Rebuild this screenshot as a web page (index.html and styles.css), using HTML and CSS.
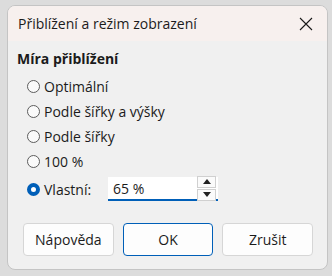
FILE: index.html
```html
<!DOCTYPE html>
<html>
<head>
    <meta charset="UTF-8">
    <title>Přiblížení a režim zobrazení</title>
    <link rel="stylesheet" href="styles.css">
</head>
<body>
    <div class="dialog">
        <div class="titlebar">
            <span class="title">Přiblížení a režim zobrazení</span>
            <svg class="close" width="14" height="14" viewBox="0 0 14 14">
                <path d="M1 1 L13 13 M13 1 L1 13" stroke="#1a1a1a" stroke-width="1.1" fill="none"/>
            </svg>
        </div>
        <div class="content">
            <div class="group-label">Míra přiblížení</div>
            <div class="options">
                <label class="option"><span class="radio"></span>Optimální</label>
                <label class="option"><span class="radio"></span>Podle šířky a výšky</label>
                <label class="option"><span class="radio"></span>Podle šířky</label>
                <label class="option"><span class="radio"></span>100 %</label>
                <div class="option custom">
                    <span class="radio checked"></span>
                    <span class="custom-label">Vlastní:</span>
                    <div class="spin">
                        <span class="spin-value">65 %</span>
                        <div class="spin-buttons">
                            <span class="spin-btn"><svg width="8" height="5" viewBox="0 0 8 5"><path d="M0 5 L4 0 L8 5 Z" fill="#222"/></svg></span>
                            <span class="spin-btn"><svg width="8" height="5" viewBox="0 0 8 5"><path d="M0 0 L4 5 L8 0 Z" fill="#222"/></svg></span>
                        </div>
                    </div>
                </div>
            </div>
            <div class="buttons">
                <button class="btn">Nápověda</button>
                <button class="btn default">OK</button>
                <button class="btn">Zrušit</button>
            </div>
        </div>
    </div>
</body>
</html>
```
FILE: styles.css
```css
body {
    margin: 0;
    background-color: #dcdcdc;
    font-family: "Open Sans", "Noto Sans", sans-serif;
    font-size: 14px;
    color: #1b1b1b;
}

.dialog {
    margin: 5px 4px 0 7px;
    width: 319px;
    height: 263px;
    border: 1px solid #c4c4c4;
    border-radius: 8px;
    background-color: #f0f0f0;
    overflow: hidden;
}

.titlebar {
    height: 35px;
    background-color: #f7f0ee;
    display: flex;
    align-items: center;
    justify-content: space-between;
    padding: 0 14px 0 10px;
}

.title {
    font-size: 14px;
}

.content {
    padding: 8px 14px 0 9px;
}

.group-label {
    font-weight: bold;
    height: 20px;
    line-height: 20px;
}

.options {
    padding-left: 10px;
    margin-top: 5px;
}

.option {
    display: flex;
    align-items: center;
    height: 25px;
}

.radio {
    width: 11px;
    height: 11px;
    border: 1px solid #5c5c5c;
    border-radius: 50%;
    background-color: #fafafa;
    margin-right: 4px;
}

.radio.checked {
    width: 5px;
    height: 5px;
    border: 4px solid #005fb8;
    background-color: #fff;
}

.custom {
    height: 30px;
}

.custom-label {
    width: 64px;
}

.spin {
    width: 110px;
    height: 24px;
    background-color: #fff;
    border-bottom: 2px solid #005fb8;
    display: flex;
    align-items: center;
    justify-content: space-between;
    padding-left: 5px;
    box-sizing: border-box;
}

.spin-buttons {
    display: flex;
    flex-direction: column;
    gap: 1px;
    margin-right: 2px;
}

.spin-btn {
    width: 17px;
    height: 10px;
    border: 1px solid #d0d0d0;
    background-color: #fbfbfb;
    display: flex;
    align-items: center;
    justify-content: center;
}

.buttons {
    display: flex;
    gap: 9px;
    margin-top: 19px;
    padding-left: 6px;
}

.btn {
    width: 91px;
    height: 33px;
    font-family: inherit;
    font-size: 14px;
    color: #1b1b1b;
    background-color: #fdfdfd;
    border: 1px solid #d6d6d6;
    border-radius: 4px;
}

.btn.default {
    border-color: #005fb8;
}
```
